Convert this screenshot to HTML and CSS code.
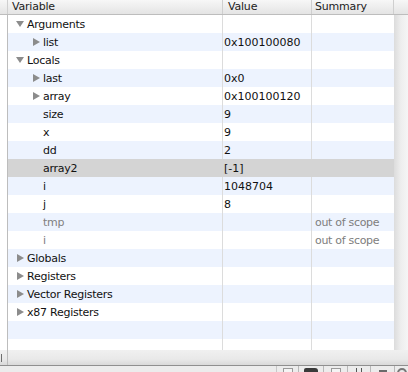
FILE: index.html
```html
<!DOCTYPE html>
<html lang="en">
<head>
  <meta charset="UTF-8">
  <title>Variables</title>
  <link rel="stylesheet" href="styles.css">
</head>
<body>
  <div class="pane">
    <div class="header">
      <div class="hcell hcell--gutter"></div>
      <div class="hcell hcell--var">Variable</div>
      <div class="hcell hcell--val">Value</div>
      <div class="hcell hcell--sum">Summary</div>
      <div class="hcell hcell--rest"></div>
    </div>

    <div class="body">
      <div class="gutter"></div>
      <div class="rows">
        <div class="row"><div class="cell var lvl0"><span class="twisty"><i class="tri tri--open"></i></span>Arguments</div><div class="cell val"></div><div class="cell sum"></div></div>
        <div class="row row--alt"><div class="cell var lvl1"><span class="twisty"><i class="tri tri--closed"></i></span>list</div><div class="cell val">0x100100080</div><div class="cell sum"></div></div>
        <div class="row"><div class="cell var lvl0"><span class="twisty"><i class="tri tri--open"></i></span>Locals</div><div class="cell val"></div><div class="cell sum"></div></div>
        <div class="row row--alt"><div class="cell var lvl1"><span class="twisty"><i class="tri tri--closed"></i></span>last</div><div class="cell val">0x0</div><div class="cell sum"></div></div>
        <div class="row"><div class="cell var lvl1"><span class="twisty"><i class="tri tri--closed"></i></span>array</div><div class="cell val">0x100100120</div><div class="cell sum"></div></div>
        <div class="row row--alt"><div class="cell var lvl1 leaf">size</div><div class="cell val">9</div><div class="cell sum"></div></div>
        <div class="row"><div class="cell var lvl1 leaf">x</div><div class="cell val">9</div><div class="cell sum"></div></div>
        <div class="row row--alt"><div class="cell var lvl1 leaf">dd</div><div class="cell val">2</div><div class="cell sum"></div></div>
        <div class="row row--selected"><div class="cell var lvl1 leaf">array2</div><div class="cell val">[-1]</div><div class="cell sum"></div></div>
        <div class="row row--alt"><div class="cell var lvl1 leaf">i</div><div class="cell val">1048704</div><div class="cell sum"></div></div>
        <div class="row"><div class="cell var lvl1 leaf">j</div><div class="cell val">8</div><div class="cell sum"></div></div>
        <div class="row row--alt row--stale"><div class="cell var lvl1 leaf">tmp</div><div class="cell val"></div><div class="cell sum">out of scope</div></div>
        <div class="row row--stale"><div class="cell var lvl1 leaf">i</div><div class="cell val"></div><div class="cell sum">out of scope</div></div>
        <div class="row row--alt"><div class="cell var lvl0"><span class="twisty"><i class="tri tri--closed"></i></span>Globals</div><div class="cell val"></div><div class="cell sum"></div></div>
        <div class="row"><div class="cell var lvl0"><span class="twisty"><i class="tri tri--closed"></i></span>Registers</div><div class="cell val"></div><div class="cell sum"></div></div>
        <div class="row row--alt"><div class="cell var lvl0"><span class="twisty"><i class="tri tri--closed"></i></span>Vector Registers</div><div class="cell val"></div><div class="cell sum"></div></div>
        <div class="row"><div class="cell var lvl0"><span class="twisty"><i class="tri tri--closed"></i></span>x87 Registers</div><div class="cell val"></div><div class="cell sum"></div></div>
        <div class="row row--alt"><div class="cell var"></div><div class="cell val"></div><div class="cell sum"></div></div>
        <div class="row"><div class="cell var"></div><div class="cell val"></div><div class="cell sum"></div></div>
      </div>
      <div class="shade"></div>
    </div>

    <div class="statusbar"><span class="grip"></span></div>

    <div class="toolbar">
      <div class="tool tool--spacer"></div>
      <div class="tool tool--a"><span class="glyph glyph--light"></span></div>
      <div class="tool tool--b"><span class="glyph glyph--dark"></span></div>
      <div class="tool tool--c"><span class="glyph glyph--light"></span></div>
      <div class="tool tool--d"><span class="glyph glyph--small"></span></div>
      <div class="tool tool--e"><span class="glyph glyph--gray"></span></div>
      <div class="tool tool--f"><span class="glyph glyph--ring"></span></div>
    </div>
  </div>
</body>
</html>
```

FILE: styles.css
```css
html,
body {
  margin: 0;
  padding: 0;
  background-color: #FFFFFF;
}

.pane {
  display: flex;
  flex-direction: column;
  width: 408px;
  height: 372px;
  overflow: hidden;
  font-family: "DejaVu Sans", sans-serif;
  font-size: 11px;
  color: #111111;
}

/* column headers */
.header {
  display: flex;
  height: 14px;
  border-bottom: 1px solid #bdbdbd;
  background: linear-gradient(#f7f7f7, #e4e4e4);
  flex-shrink: 0;
}

.hcell {
  box-sizing: border-box;
  height: 14px;
  line-height: 13px;
  color: #222222;
  letter-spacing: -0.2px;
  border-right: 1px solid #cfcfcf;
}

.hcell--gutter {
  width: 8px;
}

.hcell--var {
  width: 215px;
  padding-left: 4px;
}

.hcell--val {
  width: 89px;
  padding-left: 5px;
}

.hcell--sum {
  width: 82px;
  padding-left: 3px;
}

.hcell--rest {
  flex: 1;
  border-right: 0;
}

/* table body */
.body {
  display: flex;
  height: 335px;
  flex-shrink: 0;
  overflow: hidden;
}

.gutter {
  width: 7px;
  border-right: 1px solid #bdbdbd;
  background-color: #FFFFFF;
}

.rows {
  width: 386px;
}

.row {
  display: grid;
  grid-template-columns: 214px 89px 83px;
  height: 18px;
  background-color: #FFFFFF;
}

.row--alt {
  background-color: #edf3fe;
}

.row--selected {
  background-color: #d4d4d4;
}

.cell {
  box-sizing: border-box;
  display: flex;
  align-items: center;
  height: 18px;
  white-space: nowrap;
}

.var {
  letter-spacing: -0.25px;
}

.val {
  border-left: 1px solid #dcdcdc;
  padding-left: 1px;
}

.sum {
  border-left: 1px solid #dcdcdc;
  padding-left: 3px;
  color: #7d7d7d;
  letter-spacing: -0.3px;
}

.row--selected .val,
.row--selected .sum {
  border-left-color: #d4d4d4;
}

.row--stale .var {
  color: #808080;
}

.lvl0 {
  padding-left: 8px;
}

.lvl1 {
  padding-left: 24px;
}

.lvl1.leaf {
  padding-left: 35px;
}

.twisty {
  display: flex;
  align-items: center;
  width: 11px;
  height: 18px;
}

.tri {
  display: block;
  width: 0;
  height: 0;
}

.tri--open {
  border-left: 4.5px solid transparent;
  border-right: 4.5px solid transparent;
  border-top: 6px solid #8c8c8c;
}

.tri--closed {
  margin-left: 1px;
  border-top: 4px solid transparent;
  border-bottom: 4px solid transparent;
  border-left: 7px solid #8c8c8c;
}

.shade {
  flex: 1;
  background: linear-gradient(to right, #dcdcdc, #eeeeee 50%, #f5f5f5);
}

/* status strip under the table */
.statusbar {
  position: relative;
  height: 15px;
  flex-shrink: 0;
  border-bottom: 1px solid #8f8f8f;
  background: linear-gradient(#f0f0f0, #e9e9e9 60%, #d9d9d9);
}

.statusbar::after {
  content: "";
  position: absolute;
  left: 7px;
  top: 0;
  bottom: 0;
  border-left: 1px solid #bdbdbd;
}

.grip {
  position: absolute;
  left: 1px;
  top: 4px;
  width: 1px;
  height: 8px;
  background-color: #6e6e6e;
}

/* debugger toolbar, mostly cut off */
.toolbar {
  display: flex;
  height: 20px;
  flex-shrink: 0;
  background-color: #ececec;
}

.tool {
  display: flex;
  justify-content: center;
  padding-top: 2px;
  border-right: 1px solid #b8b8b8;
}

.tool--spacer {
  width: 276px;
  border-right: 1px solid #c8c8c8;
}

.tool--a { width: 21px; }
.tool--b { width: 24px; }
.tool--c { width: 23px; }
.tool--d { width: 22px; }
.tool--e { width: 23px; }
.tool--f { flex: 1; border-right: 0; }

.glyph {
  display: block;
}

.glyph--light {
  width: 8px;
  height: 10px;
  border: 1px solid #9a9a9a;
  border-bottom: 0;
  background-color: #f4f4f4;
}

.glyph--dark {
  width: 14px;
  height: 10px;
  border-radius: 2px 3px 0 0;
  background-color: #3a3a3a;
}

.glyph--small {
  width: 4px;
  height: 8px;
  border-left: 1px solid #555555;
  border-right: 1px solid #555555;
}

.glyph--gray {
  width: 8px;
  height: 8px;
  margin-top: 2px;
  border-top: 2px solid #6a6a6a;
  background-color: #a8a8a8;
}

.glyph--ring {
  width: 6px;
  height: 6px;
  border: 2px solid #777777;
  border-radius: 50%;
}
```
